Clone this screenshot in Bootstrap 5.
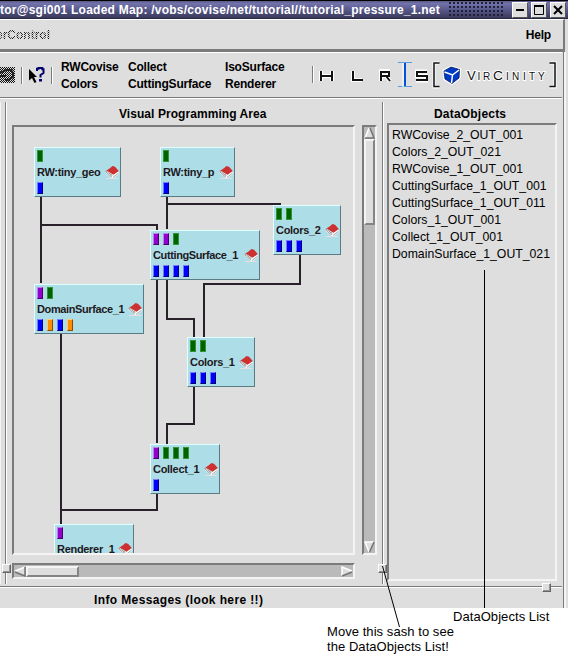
<!DOCTYPE html>
<html lang="en">
<head>
<meta charset="utf-8">
<title>Covise Map Editor</title>
<link href="https://cdn.jsdelivr.net/npm/bootstrap@5.3.0/dist/css/bootstrap.min.css" rel="stylesheet">
<style>
  :root { --face:#dedede; --dark:#7b7b7b; --lite:#f4f4f4; --trough:#bababa; }
  body { width:568px; height:658px; overflow:hidden; background:#fff; color:#000; font:12px/17px "Liberation Sans",Arial,sans-serif; }
  .app { height:608px; background:var(--face); }
  .titlebar { height:19px; border-top:1px solid #000; border-bottom:1px solid #29294a; background:linear-gradient(#5a5a84,#7373ad 15%,#5a5a8c 50%,#39395a); color:#fff; padding-right:2px; }
  .title-text { width:443px; letter-spacing:.24px; padding-top:1px; }
  .grip { width:54px; height:15px; margin-left:6px; background:radial-gradient(circle at 1px 1px,#202038 .8px,transparent 1px) 0 0/4px 4px; }
  .winbtns { gap:3px; }
  .winbtn { width:16px; height:16px; background:var(--face); border:1px solid; border-color:#fff #555 #555 #fff; }
  .menu { height:33px; width:565px; border-bottom:3px solid var(--dark); border-right:2px solid var(--dark); border-top:1px solid #fff; padding-top:1px; }
  .stipple { margin-left:-4px; background:repeating-conic-gradient(#111 0 25%,#dedede 0 50%) 0 0/2px 2px; -webkit-background-clip:text; background-clip:text; color:transparent; }
  .tools { height:46px; width:562px; border-top:1px solid #fff; border-bottom:1px solid var(--dark); box-shadow:0 1px #fff; }
  .rule { width:2px; height:17px; border-left:1px solid var(--dark); border-right:1px solid #fff; }
  .rule-a { margin:0 5px 0 6px; }
  .rule-b { margin-left:5px; }
  .shortcuts { letter-spacing:-.2px; grid-template-columns:67px 97px 70px; width:240px; margin-left:8px; padding-top:2px; }
  .tight { letter-spacing:-.2px; }
  .work { height:488px; padding-top:4px; }
  .edge { width:5px; height:482px; border-left:1px solid var(--lite); }
  .vline { width:2px; height:482px; background:linear-gradient(90deg,var(--dark) 50%,#fff 50%); }
  .sunk { border:2px solid; border-color:var(--dark) var(--lite) var(--lite) var(--dark); }
  .area { width:370px; margin-left:5px; }
  .side { margin-left:3px; }
  .heading { height:21px; padding-top:4px; letter-spacing:.06px; }
  .area .heading { padding-left:107px; }
  .side .heading { padding-left:47px; letter-spacing:.2px; }
  .canvas-row { margin-top:2px; }
  .canvas { width:343px; height:430px; }
  .vbar { width:15px; height:430px; background:var(--trough); margin-left:7px; }
  .hbar { width:343px; height:16px; background:var(--trough); margin-top:8px; }
  .thumb { background:var(--face); border:2px solid; border-color:#f4f4f4 #848484 #848484 #f4f4f4; }
  .vbar .thumb { width:11px; height:86px; }
  .hbar .thumb { width:53px; height:11px; }
  .mapnode { position:absolute; height:50px; background:#addee7; border:1px solid; border-color:#e0ffff #5a7b84 #5a7b84 #e0ffff; padding:2px 1px 2px 2px; color:#211821; }
  .port { width:6px; height:12px; border:1px solid; }
  .gap4 { gap:4px; }
  .g { background:#006300; border-color:#319431 #319431 #319431 #319431; }
  .b { background:#00f; border-color:#7b7bff #00007b #00007b #7b7bff; }
  .p { background:#9400ce; border-color:#c67bf0 #4a0063 #4a0063 #c67bf0; }
  .o { background:#ff8c00; border-color:#ffc67b #8c4a00 #8c4a00 #ffc67b; }
  .label { height:20px; font-size:11px; font-weight:bold; letter-spacing:-.3px; white-space:nowrap; }
  .label.snug { letter-spacing:-.38px; }
  .book { width:14px; height:13px; flex:none; }
  .n1{left:20px;top:20px;width:87px} .n2{left:146px;top:20px;width:75px} .n3{left:136px;top:103px;width:110px}
  .n4{left:259px;top:78px;width:68px} .n5{left:20px;top:157px;width:110px} .n6{left:173px;top:210px;width:68px}
  .n7{left:136px;top:317px;width:70px} .n8{left:40px;top:397px;width:80px}
  .objects { width:170px; height:458px; padding:2px 3px 0; font-size:12.25px; }
  .objects li { height:17px; }
  .info { height:22px; width:562px; border-top:1px solid var(--dark); box-shadow:inset 0 1px #fff; padding:5px 0 0 94px; letter-spacing:.38px; }
  .sash { position:absolute; width:9px; height:9px; background:var(--face); border:1px solid; border-color:#fff #666 #666 #fff; box-shadow:inset -1px -1px #949494; }
  .s1{left:2px;top:564px} .s2{left:378px;top:564px} .s3{left:542px;top:583px}
  .frame-edge { position:absolute; left:563px; top:52px; width:3px; height:556px; border-left:1px solid var(--dark); border-right:2px solid var(--lite); }
  .notes { height:50px; font-size:13px; line-height:15px; padding:1px 0 0 327px; letter-spacing:.06px; }
  .notes .first { padding-left:126px; }
</style>
</head>
<body class="position-relative">
<svg width="0" height="0" class="position-absolute">
  <symbol id="book" viewBox="0 0 14 13">
    <path d="M1 12.5H13" stroke="#eadfe0"/>
    <path d="M.5 4.500L0 6.500L6.500 11.800H9L13.800 8V5.500L8 8.500Z" fill="#fff"/>
    <path d="M1 4L.3 6L6.500 11.200L7.500 9L2 5.400" fill="#848484"/>
    <path d="M1.500 6L7 10.300" stroke="#fff" stroke-width=".8"/>
    <path d="M8 11.300L13.500 7.200" stroke="#9a8a8c" stroke-width=".8"/>
    <path d="M7.500 0L10 .8L13.800 5L8.500 8.800L1.500 4.500L4.500 2.500Z" fill="#ce3131"/>
  </symbol>
</svg>

<main class="app d-flex flex-column">
  <header class="titlebar d-flex align-items-center">
    <div class="title-text fw-bold text-nowrap">tor@sgi001 Loaded Map: /vobs/covise/net/tutorial//tutorial_pressure_1.net</div>
    <div class="grip"></div>
    <div class="winbtns d-flex ms-auto">
      <svg class="winbtn" viewBox="0 0 14 14"><path d="M3 7H11" stroke="#000" stroke-width="2"/></svg>
      <svg class="winbtn" viewBox="0 0 14 14"><path d="M2.5 3.5H11.5V11.5H2.5Z" fill="none" stroke="#000"/><path d="M2 3H12" stroke="#000" stroke-width="2"/></svg>
      <svg class="winbtn" viewBox="0 0 14 14"><path d="M3 3L11 11M11 3L3 11" stroke="#000" stroke-width="2"/></svg>
    </div>
  </header>

  <nav class="menu d-flex align-items-center justify-content-between fw-bold">
    <span class="stipple">erControl</span><span class="tight me-2 pe-1">Help</span>
  </nav>

  <section class="tools d-flex align-items-center">
    <svg width="15" height="16" viewBox="0 0 15 16">
      <defs><pattern id="dots" width="2" height="2" patternUnits="userSpaceOnUse"><path d="M0 0h1v1H0zM1 1h1v1H1z" fill="#111"/></pattern></defs>
      <path d="M0 0H15V16H0Z" fill="url(#dots)"/><path d="M0 6L6 3H11L13 6V10L8 13H5M0 9H6" fill="none" stroke="#222" stroke-width="2"/>
    </svg>
    <div class="rule rule-a flex-shrink-0"></div>
    <svg width="18" height="17" viewBox="0 0 18 17"><path d="M1 2L9 10H6L8.5 15L6.5 16L4 11L1 13.5Z"/><path d="M9 4V1.8H10.5V1H14.3V2.2H15.5V6L12.5 8V10.5" fill="none" stroke="#00006b" stroke-width="2"/><path d="M11 12h3v2.5h-3z" fill="#00006b"/></svg>
    <div class="rule rule-b flex-shrink-0"></div>
    <div class="shortcuts d-grid fw-bold text-nowrap flex-shrink-0">
      <span>RWCovise</span><span>Collect</span><span>IsoSurface</span>
      <span>Colors</span><span>CuttingSurface</span><span>Renderer</span>
    </div>
    <svg class="flex-shrink-0 ms-auto" width="252" height="28" viewBox="0 0 252 28">
      <path d="M2.5 5V22" stroke="#7b7b7b"/><path d="M3.5 5V22" stroke="#fff"/>
      <g fill="none" stroke="#fff" stroke-width="4"><path d="M11 10V20M22 10V20M11 15H22M43 10V19H52M71 20V10H78V15H72M76 15L80 20M117 10.5H107V15H116V19.5H106"/></g>
      <g fill="none" stroke="#111" stroke-width="2"><path d="M11 10V20M22 10V20M10 15H23M43 10V19H53M71 20V11H79V15H72M76 15L80 20M117 11H107V15H117V19H106"/></g>
      <path d="M88 1.500H102M88 25.500H102" stroke="#5a9cde"/><path d="M93 2V26" stroke="#fff"/><path d="M95 2V25" stroke="#0052d8" stroke-width="2"/>
      <g fill="none" stroke="#fff" stroke-width="3"><path d="M129 2H124V26H129M240 2H245V26H240"/></g>
      <g fill="none" stroke="#111" stroke-width="1.5"><path d="M129.500 2H124V25.500H129.500M239.500 2H245V25.500H239.500"/></g>
      <path d="M134 10L141 6L149.500 8.500L149 17L142 22.500L135 18Z" fill="#0039c6" stroke="#fff" stroke-width="3"/>
      <path d="M134 10L141 6L149.500 8.500L149 17L142 22.500L135 18Z" fill="#0039c6" stroke="#001a5a" stroke-width=".8"/>
      <path d="M134.500 11L142.500 14L149 9M142.500 14L141.500 22" fill="none" stroke="#fff" stroke-width="1.500"/>
      <g font-family="Liberation Sans,Arial,sans-serif" fill="#111" stroke="#fff" stroke-width="2" paint-order="stroke">
        <text x="157" y="18.500" font-size="13">V</text><text x="167.500" y="18.500" font-size="10">I</text><text x="173" y="18.500" font-size="10">R</text><text x="183" y="18.500" font-size="13" textLength="10" lengthAdjust="spacingAndGlyphs">C</text><text x="196" y="18.500" font-size="10">I</text><text x="202" y="18.500" font-size="10">N</text><text x="213" y="18.500" font-size="10">I</text><text x="219" y="18.500" font-size="10">T</text><text x="228" y="18.500" font-size="10">Y</text>
      </g>
    </svg>
  </section>

  <section class="work d-flex flex-shrink-0">
    <div class="d-flex flex-shrink-0"><div class="edge"></div><div class="vline"></div></div>
    <div class="area flex-shrink-0">
      <div class="heading fw-bold">Visual Programming Area</div>
      <div class="canvas-row d-flex">
        <div class="canvas sunk position-relative overflow-hidden flex-shrink-0">
          <svg class="position-absolute top-0 start-0" width="339" height="426" viewBox="14 127 339 426" fill="none" stroke="#292129" stroke-width="2">
            <path d="M41 197V283M41 225H157V232M167 197V229M167 204H280V207M300 255V284H204V339M157 280V443M167 280V319H194V337M194 387V424H167V447M157 494V510H61M61 334V524"/>
          </svg>
          <div class="mapnode n1"><div class="d-flex gap4"><i class="port g"></i></div><div class="label d-flex align-items-center justify-content-between">RW:tiny_geo<svg class="book"><use href="#book"/></svg></div><div class="d-flex gap4"><i class="port b"></i></div></div>
          <div class="mapnode n2"><div class="d-flex gap4"><i class="port g"></i></div><div class="label d-flex align-items-center justify-content-between">RW:tiny_p<svg class="book"><use href="#book"/></svg></div><div class="d-flex gap4"><i class="port b"></i></div></div>
          <div class="mapnode n3"><div class="d-flex gap4"><i class="port p"></i><i class="port p"></i><i class="port g"></i></div><div class="label snug d-flex align-items-center justify-content-between">CuttingSurface_1<svg class="book"><use href="#book"/></svg></div><div class="d-flex gap4"><i class="port b"></i><i class="port b"></i><i class="port b"></i><i class="port b"></i></div></div>
          <div class="mapnode n4"><div class="d-flex gap4"><i class="port g"></i><i class="port g"></i></div><div class="label d-flex align-items-center justify-content-between">Colors_2<svg class="book"><use href="#book"/></svg></div><div class="d-flex gap4"><i class="port b"></i><i class="port b"></i><i class="port b"></i></div></div>
          <div class="mapnode n5"><div class="d-flex gap4"><i class="port p"></i><i class="port g"></i></div><div class="label snug d-flex align-items-center justify-content-between">DomainSurface_1<svg class="book"><use href="#book"/></svg></div><div class="d-flex gap4"><i class="port b"></i><i class="port o"></i><i class="port b"></i><i class="port o"></i></div></div>
          <div class="mapnode n6"><div class="d-flex gap4"><i class="port g"></i><i class="port g"></i></div><div class="label d-flex align-items-center justify-content-between">Colors_1<svg class="book"><use href="#book"/></svg></div><div class="d-flex gap4"><i class="port b"></i><i class="port b"></i><i class="port b"></i></div></div>
          <div class="mapnode n7"><div class="d-flex gap4"><i class="port p"></i><i class="port g"></i><i class="port g"></i><i class="port g"></i></div><div class="label d-flex align-items-center justify-content-between">Collect_1<svg class="book"><use href="#book"/></svg></div><div class="d-flex gap4"><i class="port b"></i></div></div>
          <div class="mapnode n8"><div class="d-flex gap4"><i class="port p"></i></div><div class="label d-flex align-items-center justify-content-between">Renderer_1<svg class="book"><use href="#book"/></svg></div></div>
        </div>
        <div class="vbar sunk d-flex flex-column flex-shrink-0">
          <svg width="11" height="12" viewBox="0 0 11 12"><path d="M5.500 1L10 11H1Z" fill="#dedede"/><path d="M5 1L1 11" stroke="#fff" stroke-width="1.500"/><path d="M6 1L10 11H1" fill="none" stroke="#737373" stroke-width="1.500"/></svg>
          <div class="thumb"></div>
          <svg class="mt-auto" width="11" height="12" viewBox="0 0 11 12"><path d="M1 1H10L5.500 11Z" fill="#dedede"/><path d="M5 11L1 1H10" fill="none" stroke="#fff" stroke-width="1.500"/><path d="M10 1L5.500 11" stroke="#737373" stroke-width="1.500"/></svg>
        </div>
      </div>
      <div class="hbar sunk d-flex align-items-center">
        <svg width="12" height="11" viewBox="0 0 12 11"><path d="M1 5.500L11 1V10Z" fill="#dedede"/><path d="M1 5L11 1" stroke="#fff" stroke-width="1.500"/><path d="M11 1V10L1 6" fill="none" stroke="#737373" stroke-width="1.500"/></svg>
        <div class="thumb"></div>
        <svg class="ms-auto" width="12" height="11" viewBox="0 0 12 11"><path d="M1 1L11 5.500L1 10Z" fill="#dedede"/><path d="M11 5L1 1V10" fill="none" stroke="#fff" stroke-width="1.500"/><path d="M1 10L11 6" stroke="#737373" stroke-width="1.500"/></svg>
      </div>
    </div>
    <div class="vline flex-shrink-0"></div>
    <div class="side flex-shrink-0">
      <div class="heading fw-bold">DataObjects</div>
      <ul class="objects sunk list-unstyled mb-0 text-nowrap">
        <li>RWCovise_2_OUT_001</li><li>Colors_2_OUT_021</li><li>RWCovise_1_OUT_001</li><li>CuttingSurface_1_OUT_001</li><li>CuttingSurface_1_OUT_011</li><li>Colors_1_OUT_001</li><li>Collect_1_OUT_001</li><li>DomainSurface_1_OUT_021</li>
      </ul>
    </div>
  </section>
  <footer class="info fw-bold">Info Messages (look here !!)</footer>
</main>
<aside class="notes">
  <div class="first">DataObjects List</div>
  <div>Move this sash to see<br>the DataObjects List!</div>
</aside>
<div class="frame-edge"></div>
<i class="sash s1"></i><i class="sash s2"></i><i class="sash s3"></i>
<svg class="position-absolute top-0 start-0 pe-none" width="568" height="658" fill="none" stroke="#000"><path d="M484.500 270V608M382.500 566L399.500 627"/></svg>
<script src="https://cdn.jsdelivr.net/npm/bootstrap@5.3.0/dist/js/bootstrap.bundle.min.js"></script>
</body>
</html>
